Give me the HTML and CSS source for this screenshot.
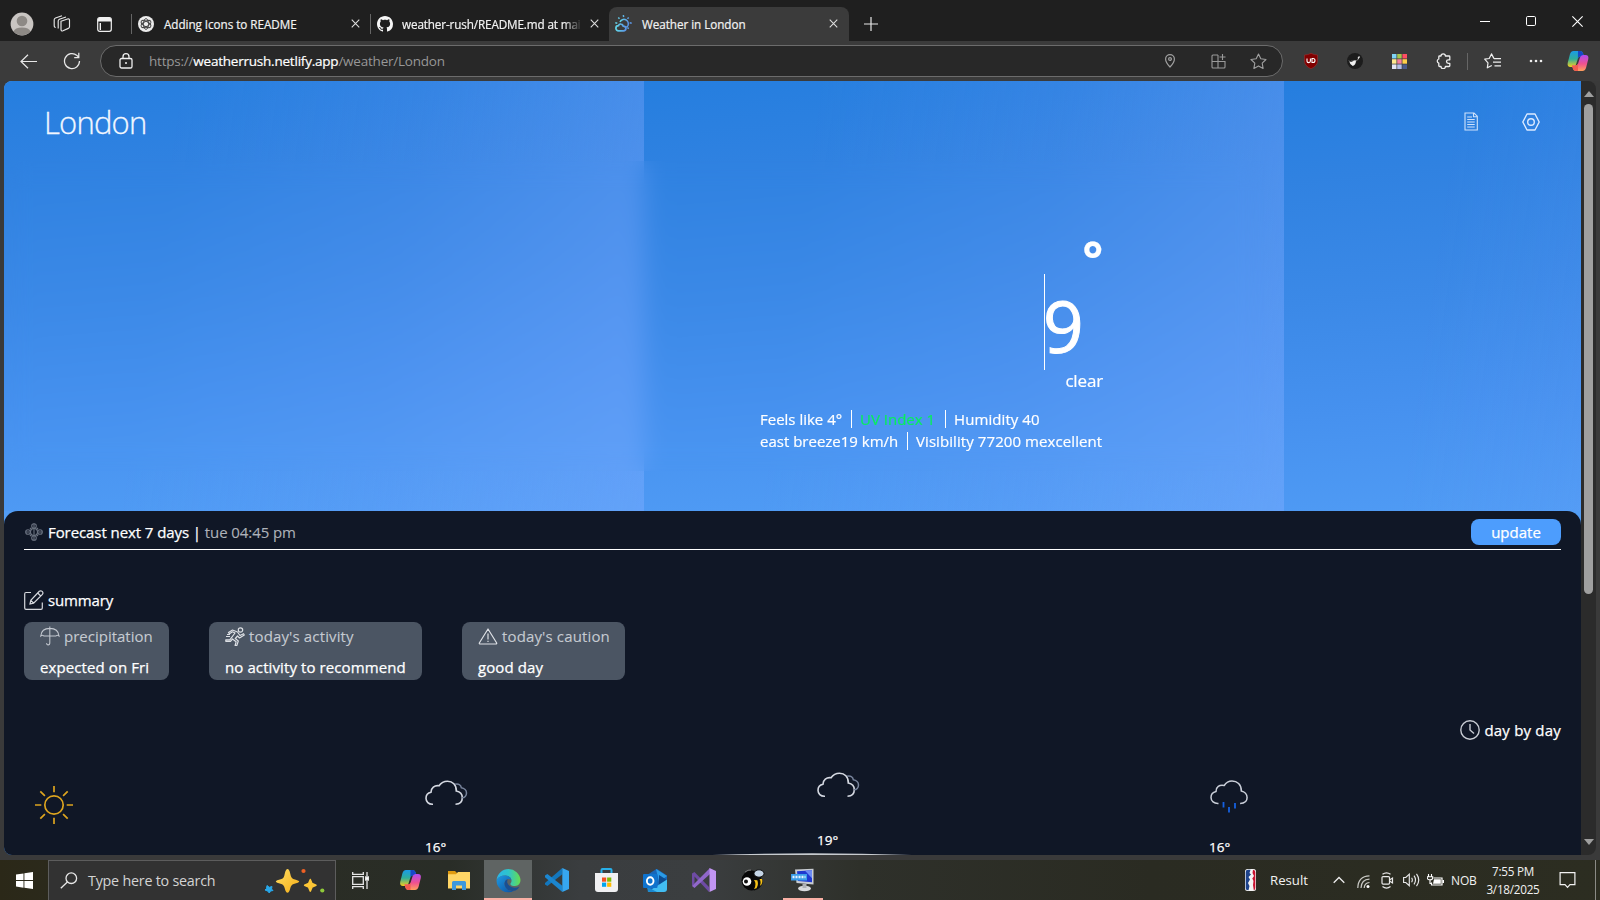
FILE: index.html
```html
<!DOCTYPE html>
<html lang="en">
<head>
<meta charset="utf-8">
<title>Weather in London</title>
<link rel="stylesheet" href="styles.css">
</head>
<body>
<svg class="defs" width="0" height="0">
  <defs>
    <linearGradient id="cpA" x1="0" y1="0" x2="0" y2="1"><stop offset="0" stop-color="#1a9be8"/><stop offset=".5" stop-color="#2fae9a"/><stop offset="1" stop-color="#f4cf1d"/></linearGradient>
    <linearGradient id="cpB" x1="0" y1="0" x2="0" y2="1"><stop offset="0" stop-color="#b04cf0"/><stop offset=".55" stop-color="#f0518f"/><stop offset="1" stop-color="#ffa05c"/></linearGradient>
    <linearGradient id="edA" x1="0" y1="0" x2="1" y2="0"><stop offset="0" stop-color="#2ab5ea"/><stop offset=".5" stop-color="#2fc4c9"/><stop offset="1" stop-color="#66dd4e"/></linearGradient>
    <linearGradient id="edB" x1="0" y1="0" x2="1" y2="1"><stop offset="0" stop-color="#1f9ae2"/><stop offset="1" stop-color="#0c4fa0"/></linearGradient>
    <linearGradient id="wth" x1="0" y1="0" x2="1" y2="0"><stop offset="0" stop-color="#62d5e6"/><stop offset="1" stop-color="#5b93e6"/></linearGradient>
    <linearGradient id="gold" x1="0" y1="0" x2="1" y2="1"><stop offset="0" stop-color="#ffdf63"/><stop offset="1" stop-color="#f5ac16"/></linearGradient>
    <symbol id="x" viewBox="0 0 10 10"><path d="M.8.8 9.2 9.2M9.2.8.8 9.2" fill="none" stroke="#dedede" stroke-width="1.2"/></symbol>
    <symbol id="copilot" viewBox="0 0 22 22">
      <path d="M6.500 1H13q2.500 0 3.300 3l.7 2.500h-3.500q-2 0-2.600 2L9 14.500q-.8 2.500-3 2.500H3.500Q0 17 .7 13L3 4Q4 1 6.500 1Z" fill="url(#cpA)"/>
      <path d="M11 1h2.500q2 0 2.800 3l.7 2.500h-3.500q-2 0-2.600 2z" fill="#1747c8"/>
      <path d="M15.500 21H9q-2.500 0-3.300-3L5 15.500h3.500q2 0 2.600-2L13 7.500Q13.800 5 16 5h2.500Q22 5 21.300 9L19 18q-1 3-3.500 3Z" fill="url(#cpB)"/>
      <path d="M11 21H9q-2.500 0-3.300-3L5 15.500h3.500q2 0 2.600-2z" fill="#f25c50"/>
    </symbol>
    <symbol id="clouds" viewBox="0 0 43 26">
      <path d="M8 24.200C3.500 24.500 1 21.500 1 18.200c0-3 2-5.400 5-6 0-4 3.500-7.200 8-6.400C16 2.800 19 1.200 22.500 1.200c5 0 9 3.400 8.800 9.800 3.500.6 6 3.300 6 6.700 0 3.800-2.600 6.300-6.800 6.500" fill="none" stroke="#d5d9e2" stroke-width="1.600"/>
      <path d="M30 4.300c3.500-1 6 .7 6.300 3.400 3 .4 5.200 2.700 5.200 5.300 0 2.900-1.900 4.900-4.500 4.800" fill="none" stroke="#77839b" stroke-width="1.500"/>
    </symbol>
  </defs>
</svg>

<header class="tabbar">
  <div class="cell avatar"><svg width="24" height="24" viewBox="0 0 24 24"><circle cx="12" cy="12" r="11.400" fill="#c9c5c2"/><circle cx="12" cy="9" r="5.300" fill="#8d8985"/><path d="M3.500 19.500Q5 15.500 12 15.500t8.500 4A11.400 11.400 0 0 1 3.500 19.500Z" fill="#8d8985"/></svg></div>
  <div class="cell spaces"><svg width="18" height="18" viewBox="0 0 18 18" fill="none" stroke="#e6e6e6" stroke-width="1.150"><path d="M8 6.300 14.500 4q2-.5 2 1.200v6.500q0 1.200-1.200 1.700l-5.300 2.400q-2 .7-2-1.200zM5.200 13.500V6q0-1.200 1.200-1.800L13 2M2.700 12.500q-1.500 0-1.500-2V4.800Q1.200 3.500 2.500 3L9 .8"/></svg></div>
  <div class="cell panes"><svg width="15" height="15" viewBox="0 0 15 15"><rect x=".7" y=".7" width="13.600" height="13.600" rx="2" fill="none" stroke="#f0f0f0" stroke-width="1.200"/><path d="M.7 3Q.7.700 3 .7h9q2.300 0 2.300 2.300v1.500H.7zM2.600 6H4v7H2.600z" fill="#f0f0f0"/></svg></div>
  <div class="tab">
    <svg width="16" height="16" viewBox="0 0 16 16"><circle cx="8" cy="8" r="8" fill="#ececec"/><g fill="none" stroke="#444" stroke-width=".9"><ellipse cx="8" cy="8" rx="2.600" ry="5.400"/><ellipse cx="8" cy="8" rx="2.600" ry="5.400" transform="rotate(60 8 8)"/><ellipse cx="8" cy="8" rx="2.600" ry="5.400" transform="rotate(120 8 8)"/></g></svg>
    <span class="title">Adding Icons to README</span>
    <svg class="close" width="9" height="9"><use href="#x"/></svg>
  </div>
  <div class="tab">
    <svg width="16" height="16" viewBox="0 0 16 16"><path fill="#f5f5f5" d="M8 0C3.580 0 0 3.580 0 8c0 3.540 2.290 6.530 5.470 7.590.4.070.55-.17.55-.38 0-.19-.01-.82-.01-1.490-2.010.37-2.530-.49-2.690-.94-.09-.23-.48-.94-.82-1.130-.28-.15-.68-.52-.01-.53.630-.01 1.080.58 1.230.82.720 1.210 1.870.87 2.330.66.070-.52.280-.87.510-1.070-1.780-.2-3.640-.89-3.640-3.950 0-.87.310-1.590.82-2.150-.08-.2-.36-1.020.08-2.120 0 0 .67-.21 2.200.82.640-.18 1.320-.27 2-.27s1.360.09 2 .27c1.530-1.040 2.200-.82 2.200-.82.440 1.100.16 1.920.08 2.120.51.560.82 1.270.82 2.150 0 3.070-1.870 3.750-3.650 3.950.29.250.54.730.54 1.480 0 1.070-.01 1.930-.01 2.200 0 .21.150.46.550.38A8.010 8.010 0 0 0 16 8c0-4.420-3.580-8-8-8z"/></svg>
    <span class="title fade">weather-rush/README.md at mai</span>
    <svg class="close" width="9" height="9"><use href="#x"/></svg>
  </div>
  <div class="tab active">
    <svg width="17" height="17" viewBox="0 0 17 17" fill="none" stroke="url(#wth)" stroke-width="1.500"><path d="M5 7a4.200 4.200 0 1 1 8 3.500q-.6 1.200-1.700 1.800"/><path d="M8.300 0l.4 2M3.300 2.500l1.200 1.200M13.700 2.500l-1.200 1.200M.3 7.800l2 .4M14.700 7.800l2 .4M13.700 13.700l-1.200-1.200"/><path d="M3.500 15.800a2.600 2.600 0 0 1 0-5.200q.8-2 2.700-1.500 1.500.3 2 2 2.700 0 2.700 2.400 0 2.300-2.400 2.300z" stroke-width="1.700"/></svg>
    <span class="title">Weather in London</span>
    <svg class="close" width="9" height="9"><use href="#x"/></svg>
  </div>
  <div class="cell plus"><svg width="14" height="14" viewBox="0 0 14 14"><path d="M7 0v14M0 7h14" stroke="#e8e8e8" stroke-width="1.200"/></svg></div>
  <div class="cell win first"><svg width="10" height="10"><path d="M0 5.500h10" stroke="#fff"/></svg></div>
  <div class="cell win"><svg width="10" height="10"><rect x=".5" y=".5" width="9" height="9" rx="1.200" fill="none" stroke="#fff"/></svg></div>
  <div class="cell win"><svg width="11" height="11" viewBox="0 0 10 10"><path d="M.3.300l9.400 9.400M9.700.300.300 9.700" stroke="#fff" stroke-width="1"/></svg></div>
</header>

<nav class="toolbar">
  <div class="cell back"><svg width="17" height="15" viewBox="0 0 17 15"><path d="M8 .7 1 7.500l7 6.800M1 7.500h16" fill="none" stroke="#e8e8e8" stroke-width="1.200"/></svg></div>
  <div class="cell reload"><svg width="18" height="18" viewBox="0 0 18 18"><path d="M16.500 9A7.500 7.500 0 1 1 14 3.500l1.800 1.700M15.800.8v4.700h-4.600" fill="none" stroke="#e8e8e8" stroke-width="1.250"/></svg></div>
  <div class="address">
    <svg class="lock" width="14" height="16" viewBox="0 0 14 16"><rect x="1" y="5.500" width="12" height="9.500" rx="1.600" fill="none" stroke="#eee" stroke-width="1.300"/><path d="M4 5.500V3.700a3 3 0 0 1 6 0v1.800" fill="none" stroke="#eee" stroke-width="1.300"/><circle cx="7" cy="10" r="1" fill="#eee"/></svg>
    <span class="url">https://<b>weatherrush.netlify.app</b>/weather/London</span>
    <svg class="pin" width="10" height="14" viewBox="0 0 10 14" fill="none" stroke="#a0a0a0" stroke-width="1.200"><path d="M5 13Q.6 8.500.6 5a4.400 4.400 0 0 1 8.800 0Q9.400 8.500 5 13Z"/><circle cx="5" cy="5" r="1.400"/></svg>
    <svg class="apps" width="15" height="15" viewBox="0 0 15 15" fill="none" stroke="#9a9a9a" stroke-width="1.100"><path d="M7 1H2Q1 1 1 2v11q0 1 1 1h11q1 0 1-1V7.500H1M7 1v13M11.500 0v6M8.500 3h6"/></svg>
    <svg class="star" width="17" height="16" viewBox="0 0 17 16"><path d="m8.500 1 2.300 4.800 5.200.7-3.800 3.700.9 5.200-4.600-2.500-4.600 2.500.9-5.200L1 6.500l5.200-.7z" fill="none" stroke="#a0a0a0" stroke-width="1.100" stroke-linejoin="round"/></svg>
  </div>
  <div class="cell ext first"><svg width="14" height="16" viewBox="0 0 14 16"><path d="M7 .3Q10 2 13.500 2v6q0 5-6.500 7.700Q.5 13 .5 8V2Q4 2 7 .3Z" fill="#800000" stroke="#a33"  stroke-width=".5"/><path d="M3 5.500v2.800q0 1.300 1.700 1.300T6.400 8V5.500M8 5.500h1q2 0 2 2t-2 2H8z" fill="none" stroke="#fff" stroke-width="1.100"/></svg></div>
  <div class="cell ext"><svg width="16" height="16" viewBox="0 0 16 16"><circle cx="8" cy="8" r="8" fill="#1c1c1c"/><path d="M2 7.500 3.500 9q1-1.500 2.500-.8l1.500-.7 1.800.3L12 5.500" fill="none" stroke="#999" stroke-width=".8"/><path d="M2.300 8.500q2 1 3.200 0 1.500-1.200 3.500-.8-.2 4.300-3.200 5.300-2.800-1-3.500-4.500z" fill="#f0f0f0"/><path d="m11 5.500 1.500-2" stroke="#eee" stroke-width="1.300"/></svg></div>
  <div class="cell ext"><svg width="15" height="15" viewBox="0 0 15 15"><path fill="#7fd4f5" d="M0 0h4.500v4.500H0z"/><path fill="#a6c84e" d="M5.200 0h4.500v4.500H5.200z"/><path fill="#ff4d63" d="M10.400 0H15v4.500h-4.600z"/><path fill="#ffe990" d="M0 5.200h4.500v4.500H0z"/><path fill="#f77fa0" d="M5.200 5.200h4.500v4.500H5.200z"/><path fill="#ffcf4a" d="M10.400 5.200H15v4.500h-4.600z"/><path fill="#e4e6f5" d="M0 10.400h4.500V15H0z"/><path fill="#b5bfe8" d="M5.200 10.400h4.500V15H5.200z"/><path fill="#4a5a8c" d="M10.400 10.400H15V15h-4.600z"/></svg></div>
  <div class="cell ext"><svg width="15" height="16" viewBox="0 0 15 16"><path d="M5 3a2.200 2.200 0 0 1 4.400 0H13q.8 0 .8.800v3h-1.500a1.800 1.800 0 0 0 0 3.600h1.500v2.300q0 .8-.8.800H9.400a2.200 2.200 0 0 1-4.400 0H3.600q-.8 0-.8-.8v-2.500a2.200 2.200 0 0 1 0-4.200V3.800q0-.8.800-.8z" fill="none" stroke="#eee" stroke-width="1.300" stroke-linejoin="round"/></svg></div>
  <div class="divider"></div>
  <div class="cell ext"><svg width="17" height="16" viewBox="0 0 17 16" fill="none" stroke="#eee" stroke-width="1.200"><path d="M10 5.600 7.500.9 5.200 5.500l-4.500.7L4 9.800l-.7 5 4.500-2.300" stroke-linejoin="round"/><path d="M10 5.600h7M9 9.200h8M10.500 12.800H17"/></svg></div>
  <div class="cell ext"><svg width="14" height="4"><circle cx="2" cy="2" r="1.300" fill="#eee"/><circle cx="7" cy="2" r="1.300" fill="#eee"/><circle cx="12" cy="2" r="1.300" fill="#eee"/></svg></div>
  <div class="cell ext side"><svg width="22" height="22"><use href="#copilot"/></svg></div>
</nav>

<div class="frame">
  <main class="page">
    <section class="hero">
      <div class="head">
        <h1>London</h1>
        <svg class="doc" width="14" height="19" viewBox="0 0 14 19" fill="none" stroke="#cfe2fb" stroke-width="1.100"><path d="M1 1h9l3.300 3.200V18H1zM9.500 1v3.700h3.800M3.200 5H8M3.200 7.500h7.500M3.200 10h7.500M3.200 12.500h7.500M3.200 15h7.500"/></svg>
        <svg width="18" height="18" viewBox="0 0 18 18" fill="none" stroke="#dceaff" stroke-width="1.400"><path d="M5 1h8l4.200 8L13 17H5L.8 9z" stroke-linejoin="round"/><circle cx="9" cy="9" r="3.300"/></svg>
      </div>
      <div class="current">
        <div class="reading">
          <div class="degree">°</div>
          <div class="temp">9</div>
          <div class="sky">clear</div>
          <div class="facts"><span class="f1">Feels like 4°</span><span class="f2 uv">UV Index 1</span><span class="f3">Humidity 40</span></div>
          <div class="facts"><span class="f4">east breeze19 km/h</span><span class="f5">Visibility 77200 mexcellent</span></div>
        </div>
      </div>
    </section>
    <section class="forecast">
      <div class="bar">
        <svg width="18" height="18" viewBox="0 0 18 18" fill="none" stroke="#69717f" stroke-width="1.100"><circle cx="9" cy="9" r="3.500"/><circle cx="9" cy="3" r="2.300"/><circle cx="9" cy="15" r="2.300"/><circle cx="3" cy="9" r="2.300"/><circle cx="15" cy="9" r="2.300"/><path d="M9 .5v17M.5 9h4M13.500 9h4M5 5l2 2M13 5l-2 2M5 13l2-2M13 13l-2-2"/></svg>
        <span class="label">Forecast next 7 days | <i>tue 04:45 pm</i></span>
        <button>update</button>
      </div>
      <div class="summary">
        <svg width="20" height="20" viewBox="0 0 20 20" fill="none" stroke="#d6d9de" stroke-width="1.200"><path d="M7 2.500H2Q.7 2.500.7 4v14q0 1.300 1.300 1.300h15q1.300 0 1.300-1.300v-5.500M6 14l.8-3.700 8.500-9q1.400-1.100 2.900.1 1.400 1.400.2 2.900l-8.800 8.800zM13.700 3l2.800 2.700M6.800 10.500l2.700 2.500"/></svg>
        <span>summary</span>
      </div>
      <div class="cards">
        <div class="card c1">
          <div class="kind"><svg width="20" height="20" viewBox="0 0 21 20" fill="none" stroke="#c2c7cf" stroke-width="1.100"><path d="M.8 10Q1.500 2 10.300 2T20 10q-1.700-1.500-3.200 0H4Q2.500 8.500.8 10ZM10.300 0v17q0 2.300-1.700 2.300T7 17.500"/></svg><span>precipitation</span></div>
          <div class="value">expected on Fri</div>
        </div>
        <div class="card c2">
          <div class="kind"><svg width="20" height="19" viewBox="0 0 20 19" fill="none" stroke="#dde0e5" stroke-width="1.200" stroke-linejoin="round"><circle cx="15.500" cy="3" r="2.200"/><path d="M3.500 5.500 7.500 3l5 2 2.500 3.500 3.500-1.800.8 1.300L14.500 11l-2-2-2.200 2.500 3 2.500-1.500 4.500h-1.700l1-3.700L7.500 12l-2 2.300H.8v-1.500h4L10 6 7.500 4.800l-3 2z"/><path d="M1 9.500h4M2 7.500h3"/></svg><span>today's activity</span></div>
          <div class="value">no activity to recommend</div>
        </div>
        <div class="card c3">
          <div class="kind"><svg width="20" height="17" viewBox="0 0 19 17" fill="none" stroke="#dde0e5" stroke-width="1.200" stroke-linejoin="round"><path d="M9.500 1 18.200 15q.2 1-1 1H1.800q-1.200 0-1-1zM9.500 5.500v6M9.500 12.700v1.300"/></svg><span>today's caution</span></div>
          <div class="value">good day</div>
        </div>
      </div>
      <div class="daily">
        <svg width="20" height="20" viewBox="0 0 20 20" fill="none" stroke="#c8ccd3" stroke-width="1.400"><circle cx="10" cy="10" r="9.200"/><path d="M10 4v6l4 3.500"/></svg>
        <span>day by day</span>
      </div>
      <div class="days">
        <div class="day d1"><svg width="40" height="40" viewBox="0 0 40 40" fill="none" stroke="#dca41f" stroke-width="1.700"><circle cx="20" cy="20" r="9.200"/><path d="M20 1v6.300M20 32.700V39M1 20h6.300M32.700 20H39M6.300 6.300l4.600 4.600M29.100 29.100l4.600 4.600M6.300 33.700l4.600-4.600M29.100 10.900l4.600-4.600"/></svg></div>
        <div class="day d2"><svg width="43" height="26"><use href="#clouds"/></svg><span>16°</span></div>
        <div class="day d3"><svg width="43" height="26"><use href="#clouds"/></svg><span>19°</span></div>
        <div class="day d4"><svg width="38" height="34" viewBox="0 0 38 34" fill="none"><path d="M8.500 23.500C4 23.800 1 20.900 1 17.500c0-3 2-5.300 5-6-.2-4.300 3.500-7.200 8.200-6C16 2.700 18.700 1 22 1c5 0 9.500 3.300 9.300 10 3.300.6 5.800 3.400 5.800 6.600 0 3.700-2.600 5.900-7 5.900" stroke="#c9ced8" stroke-width="1.500"/><path d="M13.500 22v5.500M25 23v5.500M19 27v5.500" stroke="#1560e0" stroke-width="1.800"/></svg><span>16°</span></div>
      </div>
      <div class="curve"><svg width="250" height="3" viewBox="0 0 250 3"><path d="M0 3Q125-2.500 250 3z" fill="#c8cbd0"/></svg></div>
    </section>
  </main>
  <div class="scrollbar">
    <svg width="10" height="6"><path d="M0 6 5 0l5 6z" fill="#9f9f9f"/></svg>
    <div class="thumb"></div>
    <svg class="down" width="10" height="6"><path d="M0 0h10L5 6z" fill="#9f9f9f"/></svg>
  </div>
</div>

<footer class="taskbar">
  <div class="cell app start"><svg width="17" height="17" viewBox="0 0 17 17"><path d="M0 2.500 7.500 1.400v6.700H0zM8.400 1.300 17 0v8.100H8.400zM0 9h7.500v6.700L0 14.600zM8.400 9H17v8L8.400 15.800z" fill="#fff"/></svg></div>
  <div class="search">
    <svg width="18" height="17" viewBox="0 0 18 17" fill="none" stroke="#e8e8e8" stroke-width="1.300"><circle cx="11.300" cy="6.200" r="5.300"/><path d="M7.400 10 .8 16.300"/></svg>
    <span>Type here to search</span>
    <svg class="sparks" width="61" height="26" viewBox="0 0 61 26"><path d="M23.500 1q1.800 0 2.700 4.500t3 5.500q6 1.500 6 2.500 0 1.200-5.500 2.500-2.600.8-3.500 4.500-1.100 4.300-2.700 4.300t-2.700-4.300q-.9-3.700-3.500-4.500-5.500-1.300-5.500-2.500t5.700-2.500Q20 10.500 20.800 5.500 21.800 1 23.500 1Z" fill="url(#gold)"/><path d="m46.300 11.500 1.700 4 4 1.800-4 1.800-1.700 4-1.700-4-4-1.800 4-1.800z" fill="#fdc636" stroke="#fdc636" stroke-width="1.500" stroke-linejoin="round"/><path d="m3 17.500 2.300 1.800 2.700-.8-.5 2.500 1.500 1.500-2.500.5-1.200 2-1.700-2L1 22l1.500-1.500z" fill="#28a8ea" stroke="#28a8ea" stroke-linejoin="round"/><circle cx="39.500" cy="3" r="2.100" fill="#ef6024"/><circle cx="58.300" cy="22.500" r="2.100" fill="#8fc93a"/></svg>
  </div>
  <div class="cell app view"><svg width="17" height="17" viewBox="0 0 17 17" fill="none" stroke="#e6e6e6" stroke-width="1.300"><path d="M.7 4.700h10.600v7.600H.7zM.7 0v2.300h10.600V0M.7 17v-2.300h10.600V17M15 0v4M15 9v8"/><path d="M13.700 5h2.700v3h-2.700z" fill="#fff"/></svg></div>
  <div class="cell app"><svg width="23" height="22" viewBox="0 0 22 22"><use href="#copilot"/></svg></div>
  <div class="cell app"><svg width="22" height="20" viewBox="0 0 22 20"><path d="M0 1h7l2 2h2v4H0z" fill="#e09b10"/><path d="M0 4.200h8L10 2h12v16.500H0z" fill="#ffd666"/><path d="M4 20v-7.500Q4 11 5.500 11h11q1.500 0 1.500 1.500V20h-4v-4.500H8V20z" fill="#3c98dc"/></svg></div>
  <div class="cell app open lit"><svg width="25" height="25" viewBox="0 0 25 25"><path d="M.6 12A12 12 0 0 1 24.500 12q0 5.500-5.500 6-5 0-4.500-2.500 1.300-1.500 1-3.500Q14.500 7.800 9.500 7.500 3 7.500.6 12Z" fill="url(#edA)"/><path d="M.5 12.500Q2.500 7.500 9.500 7.500q5 .3 6 4.500-3.500-2-6 .5-2.500 4 1 8 2.800 3.200 7.500 2.500A12 12 0 0 1 .5 12.500Z" fill="url(#edB)"/><path d="M10 12q-3 3.500 0 8 3 4 9.500 2.500 3-1.700 4-4-4.500 2.200-8 .5-3.500-1.700-4.300-4.500Q11 12.500 12 11.400q-1.200 0-2 .6Z" fill="#1a4f92"/></svg></div>
  <div class="cell app"><svg width="24" height="24" viewBox="0 0 24 24"><path d="M17.300 0v6.300L2.400 18 0 16.500v-1.600z" fill="#1377bd"/><path d="M0 7.600 2.400 6l14.900 11.700V24L0 9.200z" fill="#1b86d0"/><path d="m17.300 0 6.700 3v18l-6.700 3z" fill="#36a6f0"/></svg></div>
  <div class="cell app"><svg width="23" height="24" viewBox="0 0 23 24"><path d="M6.500 6V2q0-1 1-1h8q1 0 1 1v4" fill="none" stroke="#28b0ea" stroke-width="2"/><path d="M0 5h23v16q0 3-3 3H3q-3 0-3-3z" fill="#f0f0f2"/><path d="M7 9.500h4.200v4.200H7z" fill="#f25022"/><path d="M12.100 9.500h4.200v4.200h-4.200z" fill="#7fba00"/><path d="M7 14.600h4.200v4.200H7z" fill="#00a4ef"/><path d="M12.100 14.600h4.200v4.200h-4.200z" fill="#ffb900"/></svg></div>
  <div class="cell app"><svg width="24" height="23" viewBox="0 0 24 23"><path d="M4 6 13 .3q.7-.5 1.500 0L24 6.500V20H4z" fill="#1766b8"/><path d="M13 0 24 7l-8 6z" fill="#2b9be6"/><path d="M16 6 24 11l-8 6z" fill="#0d4b91"/><path d="M4.500 23 24 10.500V20q0 3-3 3z" fill="#42bdf2"/><path d="M4.500 18 14 23H7q-2.500 0-2.500-2z" fill="#1a88d0"/><rect y="5" width="14.500" height="14" rx="1" fill="#0f73cd"/><ellipse cx="7.200" cy="12" rx="3.300" ry="3.700" fill="none" stroke="#fff" stroke-width="1.900"/></svg></div>
  <div class="cell app"><svg width="24" height="24" viewBox="0 0 24 24"><path d="M0 5.500 2.500 4 17 19v5L2.500 8.500V16L0 18z" fill="#6e4ba4"/><path d="M0 18 2.500 20 18 6V0L2.500 15.500z" fill="#8f67c9"/><path d="m17.500 0 6.500 3v18l-6.500 3z" fill="#c295f3"/></svg></div>
  <div class="cell app"><svg width="24" height="24" viewBox="0 0 24 24"><circle cx="10.500" cy="12.500" r="10" fill="#060606"/><path d="M12 9q7-1 10 5-2 7-9 8.500z" fill="#0b0b0b"/><path d="M13 12q3 4 0 9l2.500-.8q2.500-4 .8-8zM18.500 11q2 3 .3 7l1.700-1.500q1.500-2.500.5-5.500z" fill="#f6c216"/><ellipse cx="18" cy="5.500" rx="5" ry="3.700" fill="#c5d5e6" stroke="#111"/><circle cx="6" cy="13.500" r="4.300" fill="#fff"/><circle cx="5" cy="13.500" r="2" fill="#111"/><path d="M4 4q3-2.500 6-2" stroke="#777" fill="none"/></svg></div>
  <div class="cell app open rdp"><svg width="24" height="24" viewBox="0 0 24 24"><path d="M4 1.500 22.500.7v15.800L5.500 15z" fill="#c8ccd2"/><path d="M6 3.200 21 2.300v12L7 13z" fill="#1f38cf"/><path d="M14 2.800 21 2.300v8z" fill="#6c8bf4"/><path d="M0 6h16v6.500H0z" fill="#3a9ce8"/><path d="M1.500 9h13" stroke="#e5f3ff" stroke-width="2.500" stroke-dasharray="2 1"/><ellipse cx="13.500" cy="20.500" rx="6.500" ry="2.800" fill="#d8dadd"/><path d="M11.500 16h4v4h-4z" fill="#aeb1b6"/></svg></div>

  <div class="tray">
    <div class="cell"><svg width="11" height="22" viewBox="0 0 11 22"><rect width="11" height="22" rx="2.500" fill="#f4f4f4"/><path d="M.7 3Q.7.800 3 .8h2.500L4.500 4l1.500 1.500L3.500 8 5 10.500 3 14l1.500 3-1 4.200Q.7 21.200.7 19z" fill="#1d428a"/><path d="M8 .8q2.300.2 2.300 2.200v16q0 2-1.500 2.200L8 16l.5-4L7.300 9.500 9 7 7.500 4z" fill="#c8102e"/></svg></div>
    <span class="result">Result</span>
    <div class="cell"><svg width="12" height="8" viewBox="0 0 12 8"><path d="m.7 6.800 5.300-5.300 5.300 5.300" fill="none" stroke="#eee" stroke-width="1.300"/></svg></div>
    <div class="cell low"><svg width="13" height="13" viewBox="0 0 13 13" fill="none" stroke="#c9c9c5" stroke-width="1.200"><path d="M.8 13Q1 1.200 12.500.8M4 13q.3-8.500 8.500-8.800M7.200 13q.2-5 5.300-5.500"/><circle cx="11" cy="11.500" r="1.500" fill="#fff" stroke="none"/></svg></div>
    <div class="cell"><svg width="13" height="17" viewBox="0 0 13 17" fill="none" stroke="#e8e8e8" stroke-width="1.200"><rect x="1" y="4.600" width="7.500" height="7.500" rx="1"/><path d="m8.500 8 3-2v5l-3-2M1.500 2.300Q5.500-.7 9.500 2.300M1.500 14.600q4 3 8 0"/></svg></div>
    <div class="cell"><svg width="17" height="14" viewBox="0 0 17 14" fill="none" stroke="#e8e8e8" stroke-width="1.150"><path d="M.6 4.500h2.200l3.500-3.300v11.500L2.800 9.500H.6zM8.600 4.700q1.500 2.300 0 4.600M11 2.700q3 4.300 0 8.600M13.500.8q4.500 6.200 0 12.400"/></svg></div>
    <div class="cell"><svg width="17" height="13" viewBox="0 0 17 13"><path d="M6.500 4h8.500v7H4.500V8.500" fill="none" stroke="#fff" stroke-width="1.200"/><path d="M7 5.300h6.800v4.500H6zM15.500 6H17v3h-1.500z" fill="#fff"/><path d="M1.500 0v2.500M4.500 0v2.500M.3 2.700h5.400v1q0 2.200-2.700 2.200T.3 3.700zM3 6v3.500h2" fill="none" stroke="#fff" stroke-width="1.100"/></svg></div>
    <span class="lang">NOB</span>
    <div class="clock"><span class="time">7:55 PM</span><span>3/18/2025</span></div>
    <div class="cell"><svg width="17" height="17" viewBox="0 0 16 17"><path d="M.6.600h14.800v12h-4.900L8 15.300l-2.500-2.700H.6z" fill="none" stroke="#f2f2f2" stroke-width="1.200"/></svg></div>
    <div class="peek"></div>
  </div>
</footer>
</body>
</html>
```
FILE: styles.css
```css
* { box-sizing: border-box; }
body {
  margin: 0;
  width: 1600px;
  height: 900px;
  overflow: hidden;
  display: flex;
  flex-direction: column;
  background: #3a3a3a;
  color: #fff;
  font-family: "Open Sans", "Noto Sans", sans-serif;
  font-size: 15px;
}
svg { display: block; flex: none; }
.defs { position: absolute; }
.cell { display: flex; align-items: center; justify-content: center; flex: none; }

/* tabs */
.tabbar { height: 41px; display: flex; background: #1f1f1f; flex: none; padding-top: 7px; }
.avatar { width: 44px; }
.spaces { width: 36px; }
.panes { width: 51px; padding-right: 3px; }
.tab {
  width: 239px;
  display: flex;
  align-items: center;
  padding: 0 10px 1px 7px;
  font-size: 11.700px;
  background: linear-gradient(#666, #666) 0 7px / 1px 20px no-repeat;
  -webkit-text-stroke: 0.200px;
}
.tab .title { width: 181px; margin-left: 10px; white-space: nowrap; color: #f2f2f2; letter-spacing: -0.050px; }
.tab .fade { width: 180px; margin-left: 9px; letter-spacing: -0.120px; -webkit-mask: linear-gradient(to right, #000 90%, transparent); mask: linear-gradient(to right, #000 90%, transparent); }
.tab .close { margin-left: auto; }
.tab.active { width: 240px; padding: 0 11px 1px 6px; background: #3b3b3b; border-radius: 8px 8px 0 0; }
.plus { width: 43px; padding-bottom: 1px; }
.win { width: 46px; padding-bottom: 6px; }
.win.first { margin-left: auto; }

/* toolbar */
.toolbar { height: 40px; display: flex; align-items: center; background: #3b3b3b; flex: none; }
.back { width: 56px; }
.reload { width: 32px; }
.address {
  width: 1183px;
  height: 32px;
  margin-left: 12px;
  border: 1px solid #6c6c6c;
  border-radius: 16px;
  background: #282828;
  display: flex;
  align-items: center;
}
.lock { margin-left: 18px; }
.url { margin-left: 16px; font-size: 13.500px; letter-spacing: -0.220px; color: #979797; }
.url b { font-weight: 400; color: #fff; -webkit-text-stroke: 0.200px; }
.pin { margin-left: auto; }
.apps { margin-left: 36px; }
.star { margin-left: 24px; margin-right: 15px; }
.ext { width: 44px; }
.ext.first { margin-left: 6px; }
.ext.side { width: 40px; }
.divider { width: 1px; height: 17px; margin: 0 2px; background: #666; }

/* page frame */
.frame { height: 779px; flex: none; display: flex; padding: 0 4px 5px; }
.page { width: 1577px; height: 774px; border-radius: 8px 0 0 8px; overflow: hidden; display: flex; flex-direction: column; background: #529df5; }
.hero {
  height: 430px;
  flex: none;
  background:
    linear-gradient(98deg, rgba(120, 165, 250, 0) 25%, rgba(120, 160, 250, .14) 60%, rgba(124, 168, 253, .4) 100%) 0 0 / 640px 440px repeat-x,
    linear-gradient(175deg, #257edf 0%, #3082e1 20%, #3b89e7 45%, #4691ef 68%, #529ef6 97%) 0 0 / 640px 440px repeat-x;
}
.head { height: 80px; padding: 0 41px 0 40px; display: flex; align-items: center; }
.head h1 { margin: 1px auto 0 0; font-size: 31px; font-weight: 300; line-height: 40px; letter-spacing: -0.800px; color: #f2f7ff; -webkit-text-stroke: 0.300px; }
.head svg { margin-top: 1px; }
.head .doc { margin-right: 44px; }
.current { width: 1260px; height: 310px; padding-right: 161px; display: flex; justify-content: flex-end; backdrop-filter: blur(12px); -webkit-text-stroke: 0.200px; }
.reading { width: 343px; display: flex; flex-direction: column; }
.degree { height: 113px; padding-top: 66px; text-align: right; font-size: 48px; font-weight: 700; line-height: 64px; }
.temp { width: 59px; height: 96px; align-self: flex-end; border-left: 1px solid #fff; font-size: 71px; line-height: 104px; text-indent: -2px; -webkit-text-stroke: 1px; }
.sky { height: 22px; text-align: right; font-size: 17px; line-height: 22px; letter-spacing: -0.150px; }
.facts { display: flex; height: 22px; line-height: 18px; white-space: nowrap; }
.facts span + span { border-left: 1px solid #fff; padding-left: 8px; height: 18px; }
.sky + .facts { margin-top: 18px; }
.uv { color: #08ee5c; }
.facts .f2 { border-color: #fff; }
.f1 { width: 91px; }
.f2 { width: 94px; }
.f4 { width: 147px; }
.f3, .f5 { letter-spacing: 0.080px; }

/* forecast */
.forecast { flex: 1; background: #101726; border-radius: 14px 14px 0 0; padding: 0 20px; display: flex; flex-direction: column; overflow: hidden; -webkit-text-stroke: 0.250px; }
.bar { height: 39px; flex: none; display: flex; align-items: center; padding: 4px 0 0 1px; border-bottom: 1px solid #fff; }
.bar .label { margin-left: 5px; letter-spacing: -0.080px; }
.bar i { font-style: normal; color: #aeb2b9; -webkit-text-stroke: 0.100px; }
.bar button { margin-left: auto; width: 90px; height: 26px; padding: 0; border: 0; border-radius: 8px; background: #4d9dfd; color: #fff; font: inherit; }
.summary { height: 72px; padding-top: 40px; flex: none; display: flex; gap: 4px; line-height: 20px; letter-spacing: -0.150px; }
.cards { display: flex; gap: 40px; flex: none; }
.card { height: 58px; padding: 3px 0 0 16px; border-radius: 8px; background: #4b5563; white-space: nowrap; }
.c1 { width: 145px; }
.c2 { width: 213px; }
.c3 { width: 163px; }
.kind { display: flex; align-items: center; gap: 4px; height: 22px; line-height: 22px; color: #c5cad1; -webkit-text-stroke: 0.100px; }
.c2 .kind, .c3 .kind { letter-spacing: 0.140px; }
.value { margin-top: 9px; line-height: 22px; letter-spacing: 0.100px; }
.daily { margin-top: 40px; display: flex; justify-content: flex-end; align-items: center; gap: 4px; height: 20px; flex: none; letter-spacing: 0.200px; }
.days { height: 115px; flex: none; display: grid; grid-template-columns: 391px 392px 392px 1fr; margin-left: 10px; }
.day { display: flex; flex-direction: column; font-size: 13.500px; line-height: 18px; }
.d1 { padding-top: 45px; }
.d2 { padding-top: 40px; }
.d3 { padding-top: 32px; }
.d4 { padding-top: 40px; }
.day span { margin-top: 32px; }
.d3 span { margin-top: 33px; }
.d4 span { margin-top: 24px; }
.d4 svg { margin-left: 1px; }
.curve { margin: -2px 0 0 663px; height: 3px; }

.scrollbar { width: 15px; background: #2b2b2b; border-radius: 0 8px 8px 0; display: flex; flex-direction: column; align-items: center; padding: 10px 0; }
.thumb { width: 9px; height: 490px; margin-top: 7px; border-radius: 5px; background: #9f9f9f; }
.down { margin-top: auto; }

/* taskbar */
.taskbar { height: 40px; display: flex; flex: none; background: linear-gradient(to right, #2b2818 0, #2b2c22 150px, #292d27 450px, #3a3d3f 580px, #3b3e40 700px, #2e302a 860px, #2a2b22 1150px, #2c2d21 1600px); }
.app { width: 48px; margin-right: 1px; }
.start { margin: 0; }
.view { margin-right: 2px; }
.lit { background: #5f6463; }
.open { border-bottom: 2px solid #fab0a5; padding-top: 2px; }
.rdp { width: 40px; margin-left: 5px; }
.search { width: 288px; display: flex; align-items: center; background: #323232; border: 1px solid #5d5d5d; border-bottom: 0; padding-left: 11px; color: #d4d4d4; font-size: 14.300px; letter-spacing: -0.220px; }
.search span { margin-left: 10px; }
.sparks { margin: 0 10px 0 auto; }
.tray { margin-left: auto; display: grid; grid-template-columns: 24px 65px 24px 25px 23px 24px 24px 32px 68px 40px 13px; align-items: center; font-size: 13.200px; width: 362px; color: #f2f2f2; }
.result { padding-left: 8px; }
.low { padding-top: 2px; }
.lang { font-size: 12px; padding-left: 4px; letter-spacing: -0.150px; }
.clock { display: flex; flex-direction: column; text-align: center; font-size: 11.700px; line-height: 18px; margin-top: -1px; letter-spacing: -0.250px; }
.peek { height: 40px; width: 1px; background: #8b8b85; margin-left: 8px; }
```
